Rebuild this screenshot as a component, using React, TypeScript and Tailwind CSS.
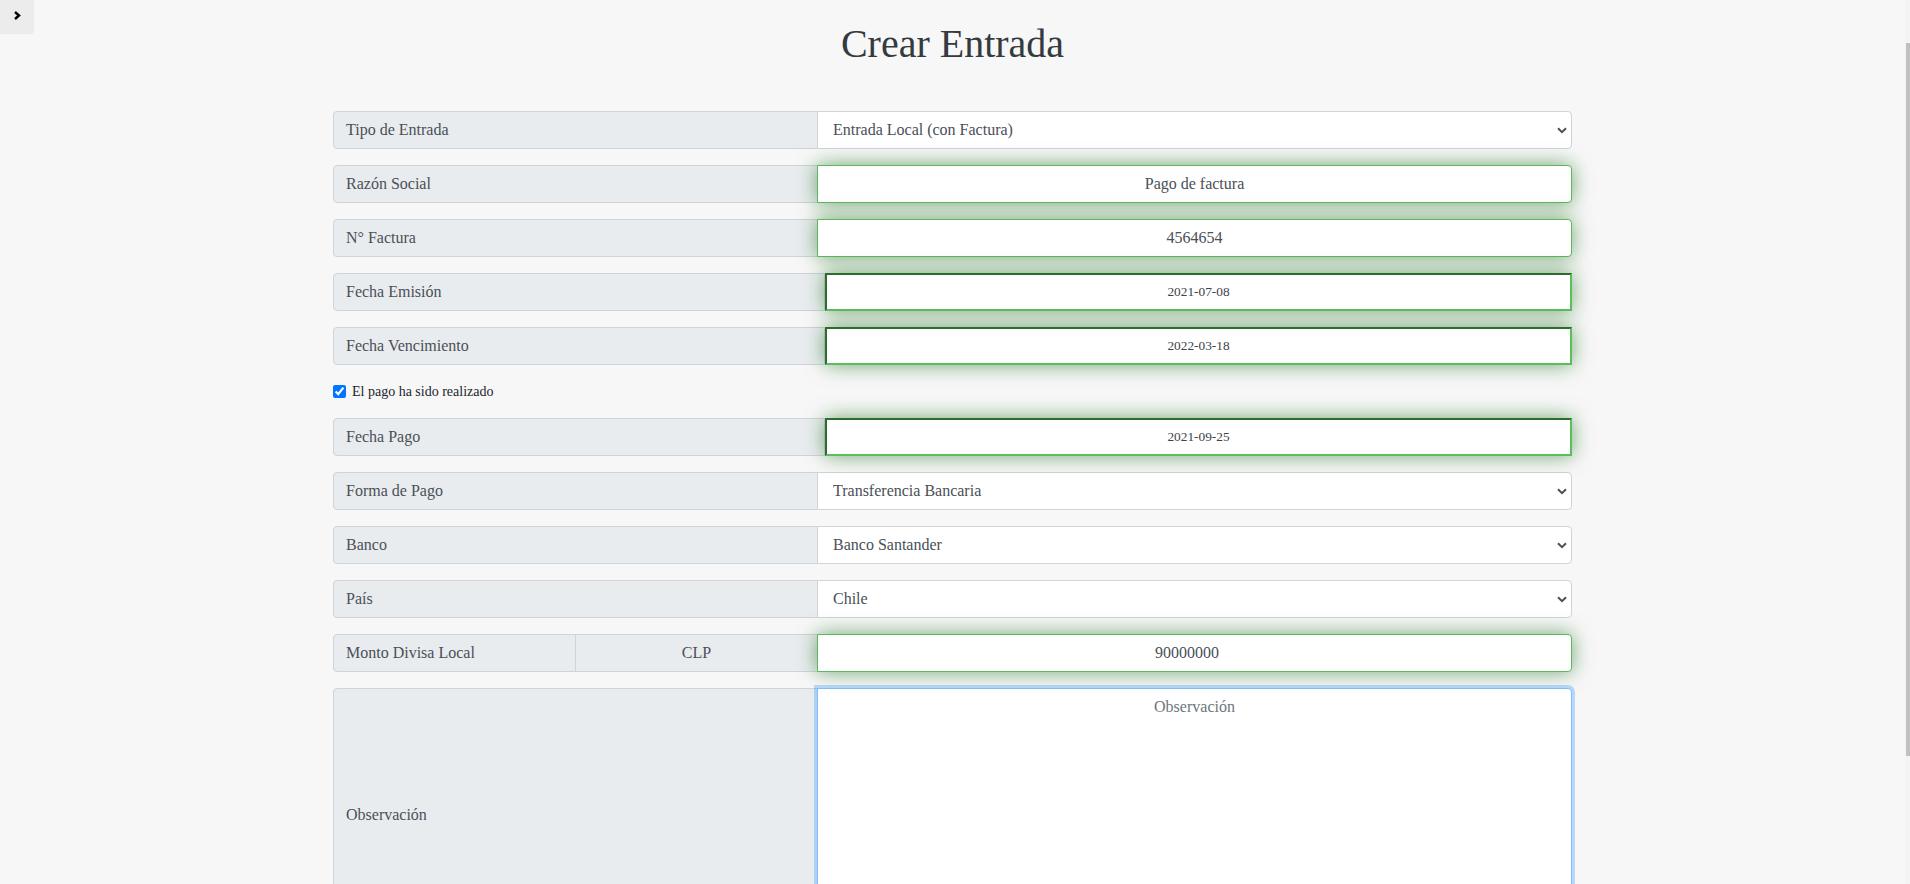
const labelBox =
  "flex h-[38px] shrink-0 items-center rounded-l border border-[#ced4da] bg-[#e9ecef] px-3 text-[16px] text-[#495057]";

const glow = "relative z-10 shadow-[0_0_20px_rgba(0,100,0,0.55)]";

const TextRow = ({ label, value }: { label: string; value: string }) => (
  <div className="mb-4 flex">
    <span className={`${labelBox} w-[485px]`}>{label}</span>
    <input
      readOnly
      value={value}
      className={`${glow} -ml-px h-[38px] flex-1 rounded-r border border-[#5cb85c] bg-white px-3 text-center text-[16px] text-[#495057] outline-none`}
    />
  </div>
);

const DateRow = ({ label, value }: { label: string; value: string }) => (
  <div className="mb-4 flex">
    <span className={`${labelBox} w-[492px]`}>{label}</span>
    <input
      readOnly
      value={value}
      className={`${glow} h-[38px] flex-1 border-2 border-t-[#2e6b2e] border-l-[#2e6b2e] border-b-[#5cbd5c] border-r-[#5cbd5c] bg-white text-center text-[13.33px] text-[#3d434a] outline-none`}
    />
  </div>
);

const SelectRow = ({ label, value }: { label: string; value: string }) => (
  <div className="mb-4 flex">
    <span className={`${labelBox} w-[485px]`}>{label}</span>
    <div className="relative -ml-px flex h-[38px] flex-1">
      <select
        defaultValue={value}
        className="h-full w-full appearance-none rounded-r border border-[#ced4da] bg-white pl-[15px] text-[16px] text-[#495057] outline-none"
      >
        <option>{value}</option>
      </select>
      <svg
        width="10"
        height="7"
        viewBox="0 0 10 7"
        className="pointer-events-none absolute right-[5px] top-[16px]"
      >
        <path d="M1 1.2 L5 5.2 L9 1.2" fill="none" stroke="#495057" strokeWidth="2" />
      </svg>
    </div>
  </div>
);

export default function App() {
  return (
    <div className="relative flex h-screen overflow-hidden bg-[#f7f7f7] font-['Liberation_Serif',serif]">
      <button className="absolute left-0 top-0 z-20 flex h-[34px] w-[34px] justify-center rounded-br bg-[#ececec] pt-[11px]">
        <svg width="8" height="9" viewBox="0 0 8 9">
          <path d="M2 1 L6 4.5 L2 8" fill="none" stroke="#000" strokeWidth="2.4" />
        </svg>
      </button>

      <main className="w-[1905px] shrink-0 pt-[20px]">
        <h1 className="text-center text-[40px] leading-[48px] text-[#343a40]">
          Crear Entrada
        </h1>

        <form className="ml-[333px] mt-[43px] flex w-[1239px] flex-col">
          <SelectRow label="Tipo de Entrada" value="Entrada Local (con Factura)" />
          <TextRow label="Razón Social" value="Pago de factura" />
          <TextRow label="N° Factura" value="4564654" />
          <DateRow label="Fecha Emisión" value="2021-07-08" />
          <DateRow label="Fecha Vencimiento" value="2022-03-18" />

          <label className="mb-4 flex h-[21px] items-center gap-[6px] text-[14px] text-[#212529]">
            <input type="checkbox" defaultChecked className="m-0 h-[13px] w-[13px]" />
            El pago ha sido realizado
          </label>

          <DateRow label="Fecha Pago" value="2021-09-25" />
          <SelectRow label="Forma de Pago" value="Transferencia Bancaria" />
          <SelectRow label="Banco" value="Banco Santander" />
          <SelectRow label="País" value="Chile" />

          <div className="mb-4 flex">
            <span className={`${labelBox} w-[243px]`}>Monto Divisa Local</span>
            <span className="-ml-px flex h-[38px] w-[243px] shrink-0 items-center justify-center border border-[#ced4da] bg-[#e9ecef] text-[16px] text-[#495057]">
              CLP
            </span>
            <input
              readOnly
              value="90000000"
              className={`${glow} -ml-px h-[38px] flex-1 rounded-r border border-[#5cb85c] bg-white pl-3 pr-[27px] text-center text-[16px] text-[#495057] outline-none`}
            />
          </div>

          <div className="mb-4 flex">
            <span className="flex w-[485px] shrink-0 items-center rounded-l border border-[#ced4da] bg-[#e9ecef] px-3 text-[16px] text-[#495057]">
              Observación
            </span>
            <textarea
              placeholder="Observación"
              className="relative z-10 -ml-px h-[254px] flex-1 resize-none rounded-r border border-[#80bdff] bg-white px-3 py-[6px] text-center text-[16px] leading-6 text-[#495057] shadow-[0_0_0_3px_rgba(0,123,255,0.25)] outline-none placeholder:text-[#6c757d]"
            />
          </div>
        </form>
      </main>

      {/* scrollbar */}
      <div className="flex w-[5px] shrink-0 justify-end bg-[#f3f3f3]">
        <div className="mt-[43px] h-[713px] w-[4px] bg-[#c1c1c1]" />
      </div>
    </div>
  );
}
